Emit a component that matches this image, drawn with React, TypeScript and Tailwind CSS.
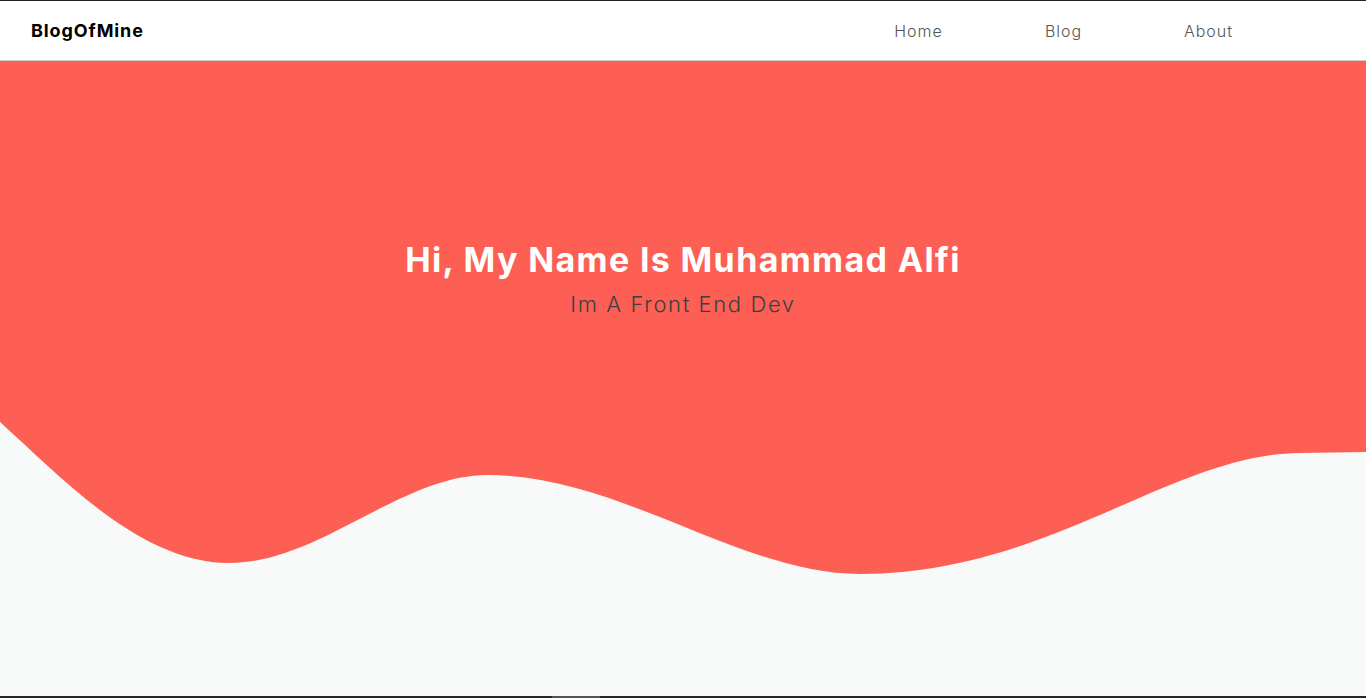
const links = ["Home", "Blog", "About"];

function Navbar() {
  return (
    <nav className="flex h-[60px] shrink-0 items-center justify-between border-b border-[#cfcfcf] bg-white">
      <a className="pl-[31px] text-[18px] font-bold tracking-[0.9px] text-black" href="#">
        BlogOfMine
      </a>
      <ul className="flex pr-[85px]">
        {links.map((l) => (
          <li key={l} className="w-[145px] text-center">
            <a href="#" className="text-[16px] font-light tracking-[1px] text-[#555]">
              {l}
            </a>
          </li>
        ))}
      </ul>
    </nav>
  );
}

function Wave() {
  return (
    <svg
      className="block h-[274px] w-full"
      viewBox="0 0 1366 274"
      preserveAspectRatio="none"
    >
      <path
        fill="#fe5f55"
        d="M0,0 C60,54 140,141 229,141 C320,141 400,53 488,53 C620,53 740,152 860,152 C1050,152 1170,32 1300,31 L1366,30 L1366,0 Z"
      />
    </svg>
  );
}

export default function App() {
  return (
    <div
      className="flex h-[698px] flex-col overflow-hidden border-t border-[#222] bg-[#f8faf9]"
      style={{ fontFamily: "Inter, 'Noto Sans', sans-serif" }}
    >
      <Navbar />
      <section className="flex flex-1 flex-col">
        <div className="flex h-[361px] flex-col items-center bg-[#fe5f55] pt-[178px]">
          <h1 className="text-[34px] font-bold leading-[42px] tracking-[1.35px] text-white">
            Hi, My Name Is Muhammad Alfi
          </h1>
          <p className="mt-[8px] text-[22px] font-light leading-[30px] tracking-[1.6px] text-[#3b3f3f]">
            Im A Front End Dev
          </p>
        </div>
        <Wave />
      </section>
      <div className="flex h-[2px] shrink-0 bg-[#262626]">
        <div className="ml-[552px] w-[48px] bg-[#555]" />
      </div>
    </div>
  );
}
